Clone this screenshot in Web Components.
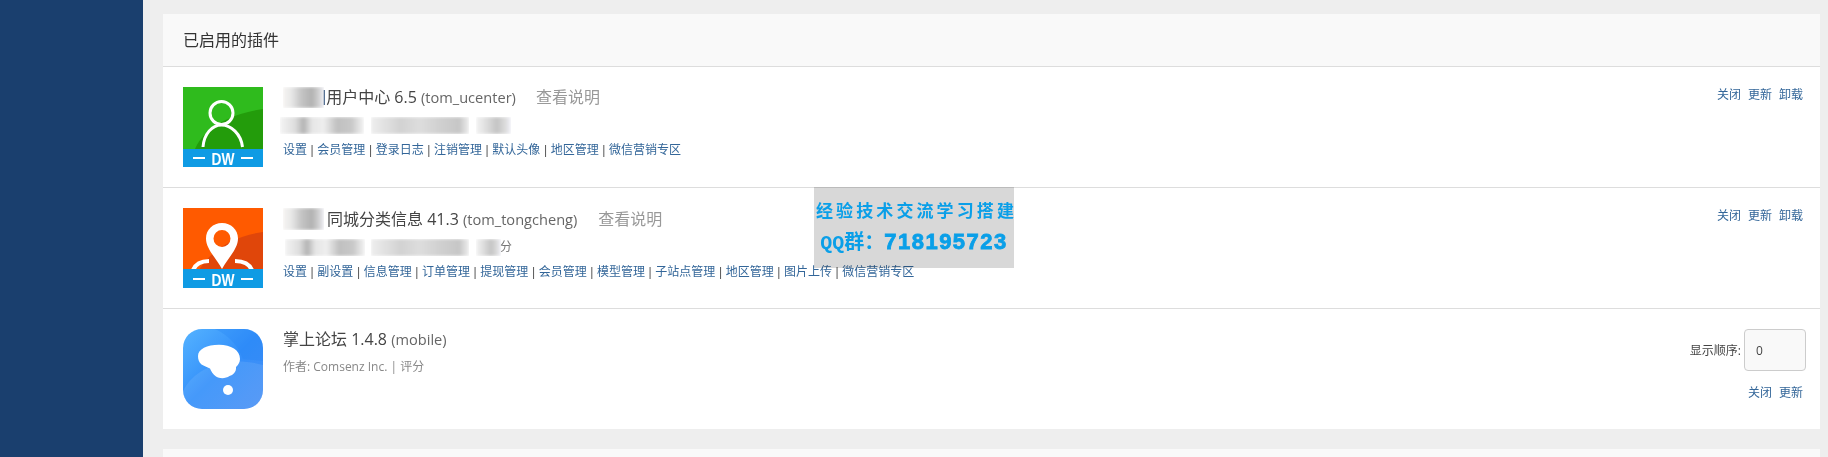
<!DOCTYPE html>
<html lang="zh">
<head>
<meta charset="utf-8">
<title>已启用的插件</title>
<style>
  html, body { margin: 0; height: 100%; overflow: hidden; }
  body { background: #eee; font-family: "Open Sans", "Noto Sans CJK SC", sans-serif; color: #444; }
  a { color: #369; text-decoration: none; }
  .sep { color: #555; margin: 0 3.6px; font-family: "Liberation Sans", sans-serif; }
  .ver { font-size: 14.600px; color: #666; }
  .doc { font-size: 16px; color: #999; margin-left: 20px; }
  .bar { color: #1a3f6e; margin: 0 0 0 -2px; font-family: "Liberation Sans", sans-serif; }
</style>
</head>
<body>

<template id="admin-shell-tpl">
  <style>
    :host { display: grid; grid-template-columns: 143px 1fr; height: 457px; overflow: hidden; }
    aside { background: #1a3f6e; }
    main { padding: 14px 8px 0 20px; display: flex; flex-direction: column; gap: 20px; min-width: 0; }
  </style>
  <aside></aside>
  <main><slot></slot></main>
</template>

<template id="plugin-panel-tpl">
  <style>
    :host { display: block; background: #fff; flex: none; }
    header { box-sizing: border-box; height: 53px; padding: 0 20px 2px; background: #f9f9f9; border-bottom: 1px solid #ddd; display: flex; align-items: center; font-size: 16px; color: #333; }
  </style>
  <header><slot name="title"></slot></header>
  <slot></slot>
</template>

<template id="plugin-row-tpl">
  <style>
    :host { display: flex; height: 120px; padding: 0 14px 0 20px; border-bottom: 1px solid #ddd; }
    :host([last]) { border-bottom: 0; }
    .icon { width: 80px; height: 80px; margin-top: 20px; flex: none; }
    .body { flex: 1; min-width: 0; margin: 19px 0 0 20px; }
    .title { font-size: 16px; line-height: 22px; white-space: nowrap; display: flex; align-items: center; }
    .meta { font-size: 12px; line-height: 18px; margin-top: 8px; color: #888; white-space: nowrap; display: flex; align-items: center; }
    .links { font-size: 12px; line-height: 18px; margin-top: 7px; white-space: nowrap; color: #555; }
    .side { margin-top: 20px; display: flex; flex-direction: column; align-items: flex-end; }
  </style>
  <div class="icon"><slot name="icon"></slot></div>
  <div class="body">
    <div class="title"><slot name="title"></slot></div>
    <div class="meta"><slot name="meta"></slot></div>
    <div class="links"><slot name="links"></slot></div>
  </div>
  <div class="side"><slot name="side"></slot></div>
</template>

<template id="row-actions-tpl">
  <style>
    :host { display: flex; gap: 7px; font-size: 12px; line-height: 16px; padding-right: 3px; }
    :host([below]) { margin-top: 14px; }
  </style>
  <slot></slot>
</template>

<template id="order-field-tpl">
  <style>
    :host { display: flex; align-items: center; gap: 3px; font-size: 12px; color: #444; }
    input { box-sizing: border-box; width: 62px; height: 42px; padding: 0 0 0 11px; border: 1px solid #ccc; border-radius: 4px; background: #f9f9f9; font: 12px "Open Sans", sans-serif; color: #444; }
  </style>
  <span>显示顺序:</span>
  <input value="0">
</template>

<template id="blur-patch-tpl">
  <style>
    :host { display: block; overflow: hidden; flex: none; margin-top: 1px; }
    div { height: 100%; filter: blur(1.500px); }
  </style>
  <div></div>
</template>

<template id="water-mark-tpl">
  <style>
    :host { position: absolute; left: 814px; top: 187px; width: 200px; height: 81px; background: #d8d8d8; color: #0a9fe8; text-align: center; mix-blend-mode: multiply; }
    .a { font: bold 17px/20px "Noto Sans CJK SC", sans-serif; letter-spacing: 3.100px; margin: 13px 0 0 2px; white-space: nowrap; }
    .b { font: bold 20px/30px "Liberation Mono", "Noto Sans CJK SC", monospace; margin-top: 7px; white-space: nowrap; }
    .b b { font: bold 22px/30px "Liberation Sans", sans-serif; letter-spacing: 1.500px; -webkit-text-stroke: .8px #0a9fe8; }
  </style>
  <div class="a"><slot name="line"></slot></div>
  <div class="b"><slot name="qq"></slot><b><slot name="num"></slot></b></div>
</template>

<template id="dw-icon-tpl">
  <style>
    :host { display: block; width: 80px; height: 80px; }
    svg { display: block; }
  </style>
  <svg width="80" height="80" viewBox="0 0 80 80"></svg>
</template>

<template id="forum-icon-tpl">
  <style>
    :host { display: block; width: 80px; height: 80px; }
    svg { display: block; }
  </style>
  <svg width="80" height="80" viewBox="0 0 80 80">
    <defs>
      <linearGradient id="fg" x1="0" y1="0" x2="1" y2="1">
        <stop offset="0" stop-color="#55b3ff"/>
        <stop offset=".5" stop-color="#338ffa"/>
        <stop offset="1" stop-color="#4a90f5"/>
      </linearGradient>
      <clipPath id="fc"><rect width="80" height="80" rx="19"/></clipPath>
    </defs>
    <g clip-path="url(#fc)">
      <rect width="80" height="80" fill="url(#fg)"/>
      <path d="M0 80V62C12 38 44 26 80 36V80Z" fill="#fff" opacity=".09"/>
      <path d="M32 0C46 6 56 18 60 30L80 32V0Z" fill="#1f7ff5" opacity=".25"/>
    </g>
    <path d="M15 27C15 20 24 15.700 36 15.700C48 15.700 57 21 57 30C57 33.500 55 36 53 38C53.500 43 50 46 46.500 47C43 49.500 37 50 33 47.500C30 45.500 28 42 27 39.500C24 38 21 37 18.500 35.500C16 33.500 15 30.500 15 27Z" fill="#fff"/>
    <circle cx="45" cy="61" r="5" fill="#fff"/>
  </svg>
</template>

<admin-shell>
  <plugin-panel>
    <span slot="title">已启用的插件</span>

    <plugin-row>
      <dw-icon slot="icon" kind="user"></dw-icon>
      <span slot="title" style="display:contents"><blur-patch style="width:41px;height:21px" tone="title"></blur-patch><span class="bar">|</span><span>用户中心 6.5 <span class="ver">(tom_ucenter)</span></span><span class="doc">查看说明</span></span>
      <span slot="meta" style="display:contents">
        <blur-patch style="width:84px;height:17px;margin-left:-3px" tone="a"></blur-patch>
        <blur-patch style="width:98px;height:17px;margin-left:7px" tone="b"></blur-patch>
        <blur-patch style="width:35px;height:17px;margin-left:7px" tone="c"></blur-patch>
      </span>
      <span slot="links"><a href="#">设置</a><span class="sep">|</span><a href="#">会员管理</a><span class="sep">|</span><a href="#">登录日志</a><span class="sep">|</span><a href="#">注销管理</a><span class="sep">|</span><a href="#">默认头像</a><span class="sep">|</span><a href="#">地区管理</a><span class="sep">|</span><a href="#">微信营销专区</a></span>
      <row-actions slot="side"><a href="#">关闭</a><a href="#">更新</a><a href="#">卸载</a></row-actions>
    </plugin-row>

    <plugin-row>
      <dw-icon slot="icon" kind="pin"></dw-icon>
      <span slot="title" style="display:contents"><blur-patch style="width:41px;height:22px;margin-right:3px" tone="title"></blur-patch><span>同城分类信息 41.3 <span class="ver">(tom_tongcheng)</span></span><span class="doc" style="margin-left:21px">查看说明</span></span>
      <span slot="meta" style="display:contents">
        <blur-patch style="width:80px;height:17px;margin-left:2px" tone="a"></blur-patch>
        <blur-patch style="width:98px;height:17px;margin-left:6px" tone="b"></blur-patch>
        <blur-patch style="width:25px;height:17px;margin-left:7px" tone="c"></blur-patch><span style="margin-left:-1px;color:#777">分</span>
      </span>
      <span slot="links"><a href="#">设置</a><span class="sep">|</span><a href="#">副设置</a><span class="sep">|</span><a href="#">信息管理</a><span class="sep">|</span><a href="#">订单管理</a><span class="sep">|</span><a href="#">提现管理</a><span class="sep">|</span><a href="#">会员管理</a><span class="sep">|</span><a href="#">模型管理</a><span class="sep">|</span><a href="#">子站点管理</a><span class="sep">|</span><a href="#">地区管理</a><span class="sep">|</span><a href="#">图片上传</a><span class="sep">|</span><a href="#">微信营销专区</a></span>
      <row-actions slot="side"><a href="#">关闭</a><a href="#">更新</a><a href="#">卸载</a></row-actions>
    </plugin-row>

    <plugin-row last>
      <forum-icon slot="icon"></forum-icon>
      <span slot="title">掌上论坛 1.4.8 <span class="ver">(mobile)</span></span>
      <span slot="meta">作者: Comsenz Inc. | 评分</span>
      <order-field slot="side"></order-field>
      <row-actions slot="side" below><a href="#">关闭</a><a href="#">更新</a></row-actions>
    </plugin-row>
  </plugin-panel>

  <plugin-panel></plugin-panel>
</admin-shell>

<water-mark>
  <span slot="line">经验技术交流学习搭建</span>
  <span slot="qq">QQ群：</span>
  <span slot="num">718195723</span>
</water-mark>

<script>
// clona el template en un shadow abierto
class Base extends HTMLElement {
  constructor() {
    super()
    this.attachShadow({ mode: 'open' })
    const tpl = document.getElementById(this.localName + '-tpl')
    this.shadowRoot.appendChild(tpl.content.cloneNode(true))
  }
}

class BlurPatch extends Base {
  static tones = {
    title: 'linear-gradient(90deg,#f6f4f2 0,#e8e8e8 20%,#c4c4c4 45%,#b2b2b2 70%,#ccc 85%,#eeeef4 100%)',
    a: 'linear-gradient(90deg,#f4f4f4 0,#ddd 18%,#b4b4b4 28%,#e6e6e6 38%,#eee 52%,#c0c0c0 68%,#c8c8c8 85%,#f4f4f4 100%)',
    b: 'linear-gradient(90deg,#eee 0,#d2d2d2 30%,#ddd 50%,#d0d0d0 70%,#c6c6c6 90%,#eee 100%)',
    c: 'linear-gradient(90deg,#f4f4f4 0,#ddd 30%,#c4c4c4 60%,#ddd 85%,#f2f2fa 100%)'
  }
  connectedCallback() {
    this.shadowRoot.querySelector('div').style.background = BlurPatch.tones[this.getAttribute('tone')]
  }
}

class DwIcon extends Base {
  connectedCallback() {
    const user = this.getAttribute('kind') == 'user'
    const base = user ? '#2fbb1d' : '#ff5a00'
    const dark = user ? '#239c0b' : '#e0460a'
    const art = user
      ? `<circle cx="38.500" cy="26" r="11.500" fill="none" stroke="#fff" stroke-width="3"/>
         <path d="M20 60C21 47 29 38 38.500 38C48 38 58 47 59.500 60" fill="none" stroke="#fff" stroke-width="3"/>`
      : `<path d="M10 62C13 55 19 53 26 53M69 62C66 55 59 53 52 53" fill="none" stroke="#fff" stroke-width="4"/>
         <path fill-rule="evenodd" fill="#fff" d="M39 61C33 50 23 41 23 30.500C23 21.500 30 15 39 15C48 15 55 21.500 55 30.500C55 41 45 50 39 61ZM39 22A8.500 8.500 0 1 0 39 39A8.500 8.500 0 1 0 39 22Z"/>`
    this.shadowRoot.querySelector('svg').innerHTML = `
      <rect width="80" height="80" fill="${base}"/>
      <path d="M${user ? '12 62C22 38 52 26 80 22' : '16 62C30 40 52 28 80 24'}V62Z" fill="${dark}"/>
      ${art}
      <rect y="${user ? 62 : 61}" width="80" height="${user ? 18 : 19}" fill="#0f9be4"/>
      <rect x="10" y="70" width="12" height="2" fill="#fff"/>
      <rect x="58" y="70" width="12" height="2" fill="#fff"/>
      <text x="40" y="77.500" text-anchor="middle" fill="#fff" font-family="Liberation Sans" font-weight="bold" font-size="17" textLength="23" lengthAdjust="spacingAndGlyphs">DW</text>`
  }
}

customElements.define('admin-shell', class extends Base {})
customElements.define('plugin-panel', class extends Base {})
customElements.define('plugin-row', class extends Base {})
customElements.define('row-actions', class extends Base {})
customElements.define('order-field', class extends Base {})
customElements.define('water-mark', class extends Base {})
customElements.define('forum-icon', class extends Base {})
customElements.define('blur-patch', BlurPatch)
customElements.define('dw-icon', DwIcon)
</script>
</body>
</html>
